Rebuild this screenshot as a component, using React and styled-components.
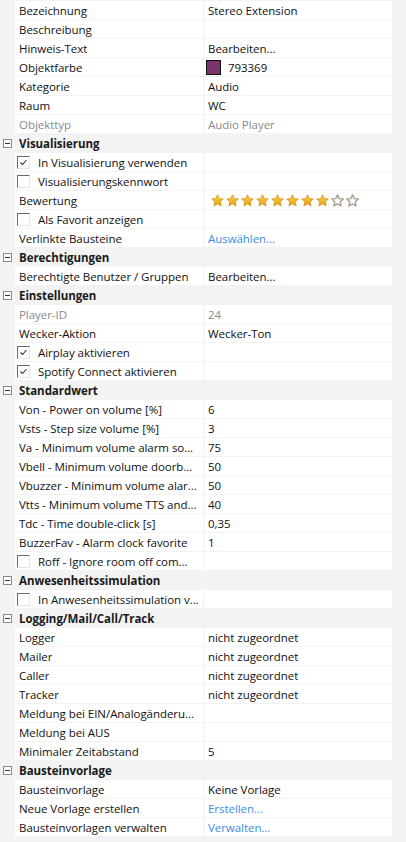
import React from "react";
import styled, { createGlobalStyle } from "styled-components";

const GlobalStyle = createGlobalStyle`
  html, body {
    margin: 0;
    padding: 0;
    background: #f3f3f3;
  }
  body {
    font-family: "Open Sans", "Noto Sans", "Liberation Sans", sans-serif;
    font-size: 11.5px;
    letter-spacing: -0.05px;
    color: #111;
  }
`;

const Grid = styled.div`
  width: 406px;
  padding-top: 1px;
  display: flex;
  flex-direction: column;
  gap: 1px;
  background: #f3f3f3;
`;

const Row = styled.div`
  display: grid;
  grid-template-columns: 188px 188px;
  column-gap: 1px;
  padding-left: 15px;
  height: 18px;
`;

const NameCell = styled.div`
  box-sizing: border-box;
  background: #fff;
  display: flex;
  align-items: center;
  gap: 8px;
  padding-left: ${(p) => (p.$check ? "2px" : "4px")};
  padding-right: 4px;
  padding-top: 2px;
  line-height: 16px;
  white-space: nowrap;
  overflow: hidden;
  color: ${(p) => (p.$disabled ? "#8a8a8a" : "#111")};
`;

const NameText = styled.span`
  overflow: hidden;
  text-overflow: ellipsis;
  white-space: nowrap;
`;

const ValueCell = styled.div`
  box-sizing: border-box;
  background: #fff;
  display: flex;
  align-items: center;
  gap: 7px;
  padding-left: ${(p) => (p.$kind === "color" ? "2px" : p.$kind === "stars" ? "7px" : "4px")};
  padding-top: ${(p) => (p.$kind === "color" || p.$kind === "stars" ? "0" : "2px")};
  line-height: 16px;
  white-space: nowrap;
  overflow: hidden;
  color: ${(p) =>
    p.$kind === "link" ? "#3b8ceb" : p.$kind === "disabled" ? "#8a8a8a" : "#111"};
`;

const ColorText = styled.span`
  padding-top: 2px;
`;

const Header = styled.div`
  box-sizing: border-box;
  display: flex;
  align-items: center;
  height: 18px;
  padding-left: 3px;
  gap: 7px;
  font-weight: 700;
  color: #1a1a1a;
`;

const HeaderText = styled.span`
  padding-top: 2px;
  line-height: 16px;
`;

const Toggle = styled.span`
  box-sizing: border-box;
  width: 9px;
  height: 9px;
  border: 1px solid #8a8a8a;
  background: #fff;
  position: relative;
  &::after {
    content: "";
    position: absolute;
    left: 1px;
    right: 1px;
    top: 3px;
    height: 1px;
    background: #333;
  }
`;

const Check = styled.span`
  box-sizing: border-box;
  width: 13px;
  height: 13px;
  flex: none;
  margin-top: -2px;
  border-top: 1px solid #6a6a6a;
  border-left: 1px solid #6a6a6a;
  border-right: 1px solid #e6e6e6;
  border-bottom: 1px solid #e6e6e6;
  background: #fff;
  display: flex;
  align-items: center;
  justify-content: center;
`;

const Swatch = styled.span`
  box-sizing: border-box;
  width: 15px;
  height: 15px;
  border: 1px solid #111;
  background: ${(p) => p.$color};
  flex: none;
`;

const Stars = styled.span`
  display: flex;
  gap: 2px;
  align-items: center;
`;

const STAR =
  "6.5,0.8 8.2,4.6 12.3,5 9.2,7.8 10.1,11.9 6.5,9.8 2.9,11.9 3.8,7.8 0.7,5 4.8,4.6";

function Star({ filled, id }) {
  return (
    <svg width="13" height="13" viewBox="0 0 13 13">
      <defs>
        <linearGradient id={id} x1="0" y1="0" x2="0" y2="1">
          <stop offset="0" stopColor="#fbd75a" />
          <stop offset="1" stopColor="#e59d0c" />
        </linearGradient>
      </defs>
      {filled ? (
        <polygon points={STAR} fill={`url(#${id})`} stroke="#d39214" strokeWidth="0.8" strokeLinejoin="round" />
      ) : (
        <polygon points={STAR} fill="#fff" stroke="#a99f8e" strokeWidth="1.4" strokeLinejoin="round" />
      )}
    </svg>
  );
}

function CheckMark({ checked }) {
  return (
    <Check>
      {checked && (
        <svg width="9" height="9" viewBox="0 0 9 9">
          <polyline points="1.5,4.5 3.5,6.5 7.5,2" fill="none" stroke="#333" strokeWidth="1.1" />
        </svg>
      )}
    </Check>
  );
}

const sections = [
  {
    rows: [
      { n: "Bezeichnung", v: "Stereo Extension" },
      { n: "Beschreibung", v: "" },
      { n: "Hinweis-Text", v: "Bearbeiten..." },
      { n: "Objektfarbe", v: "793369", k: "color" },
      { n: "Kategorie", v: "Audio" },
      { n: "Raum", v: "WC" },
      { n: "Objekttyp", v: "Audio Player", dis: true, k: "disabled" },
    ],
  },
  {
    title: "Visualisierung",
    rows: [
      { n: "In Visualisierung verwenden", check: true, checked: true },
      { n: "Visualisierungskennwort", check: true },
      { n: "Bewertung", k: "stars", stars: 8 },
      { n: "Als Favorit anzeigen", check: true },
      { n: "Verlinkte Bausteine", v: "Auswählen...", k: "link" },
    ],
  },
  {
    title: "Berechtigungen",
    rows: [{ n: "Berechtigte Benutzer / Gruppen", v: "Bearbeiten..." }],
  },
  {
    title: "Einstellungen",
    rows: [
      { n: "Player-ID", v: "24", dis: true, k: "disabled" },
      { n: "Wecker-Aktion", v: "Wecker-Ton" },
      { n: "Airplay aktivieren", check: true, checked: true },
      { n: "Spotify Connect aktivieren", check: true, checked: true },
    ],
  },
  {
    title: "Standardwert",
    rows: [
      { n: "Von - Power on volume [%]", v: "6" },
      { n: "Vsts - Step size volume [%]", v: "3" },
      { n: "Va - Minimum volume alarm so...", v: "75" },
      { n: "Vbell - Minimum volume doorb...", v: "50" },
      { n: "Vbuzzer - Minimum volume alar...", v: "50" },
      { n: "Vtts - Minimum volume TTS and...", v: "40" },
      { n: "Tdc - Time double-click [s]", v: "0,35" },
      { n: "BuzzerFav - Alarm clock favorite", v: "1" },
      { n: "Roff - Ignore room off com...", check: true },
    ],
  },
  {
    title: "Anwesenheitssimulation",
    rows: [{ n: "In Anwesenheitssimulation v...", check: true }],
  },
  {
    title: "Logging/Mail/Call/Track",
    rows: [
      { n: "Logger", v: "nicht zugeordnet" },
      { n: "Mailer", v: "nicht zugeordnet" },
      { n: "Caller", v: "nicht zugeordnet" },
      { n: "Tracker", v: "nicht zugeordnet" },
      { n: "Meldung bei EIN/Analogänderu...", v: "" },
      { n: "Meldung bei AUS", v: "" },
      { n: "Minimaler Zeitabstand", v: "5" },
    ],
  },
  {
    title: "Bausteinvorlage",
    rows: [
      { n: "Bausteinvorlage", v: "Keine Vorlage" },
      { n: "Neue Vorlage erstellen", v: "Erstellen...", k: "link" },
      { n: "Bausteinvorlagen verwalten", v: "Verwalten...", k: "link" },
    ],
  },
];

function Value({ r }) {
  if (r.k === "color") {
    return (
      <ValueCell $kind="color">
        <Swatch $color={"#" + r.v} />
        <ColorText>{r.v}</ColorText>
      </ValueCell>
    );
  }
  if (r.k === "stars") {
    return (
      <ValueCell $kind="stars">
        <Stars>
          {Array.from({ length: 10 }, (_, i) => (
            <Star key={i} id={`sg${i}`} filled={i < r.stars} />
          ))}
        </Stars>
      </ValueCell>
    );
  }
  return <ValueCell $kind={r.k}>{r.v || ""}</ValueCell>;
}

export default function App() {
  return (
    <>
      <GlobalStyle />
      <Grid>
        {sections.map((s, si) => (
          <React.Fragment key={si}>
            {s.title && (
              <Header>
                <Toggle />
                <HeaderText>{s.title}</HeaderText>
              </Header>
            )}
            {s.rows.map((r, ri) => (
              <Row key={ri}>
                <NameCell $check={r.check} $disabled={r.dis}>
                  {r.check && <CheckMark checked={r.checked} />}
                  <NameText>{r.n}</NameText>
                </NameCell>
                <Value r={r} />
              </Row>
            ))}
          </React.Fragment>
        ))}
      </Grid>
    </>
  );
}
